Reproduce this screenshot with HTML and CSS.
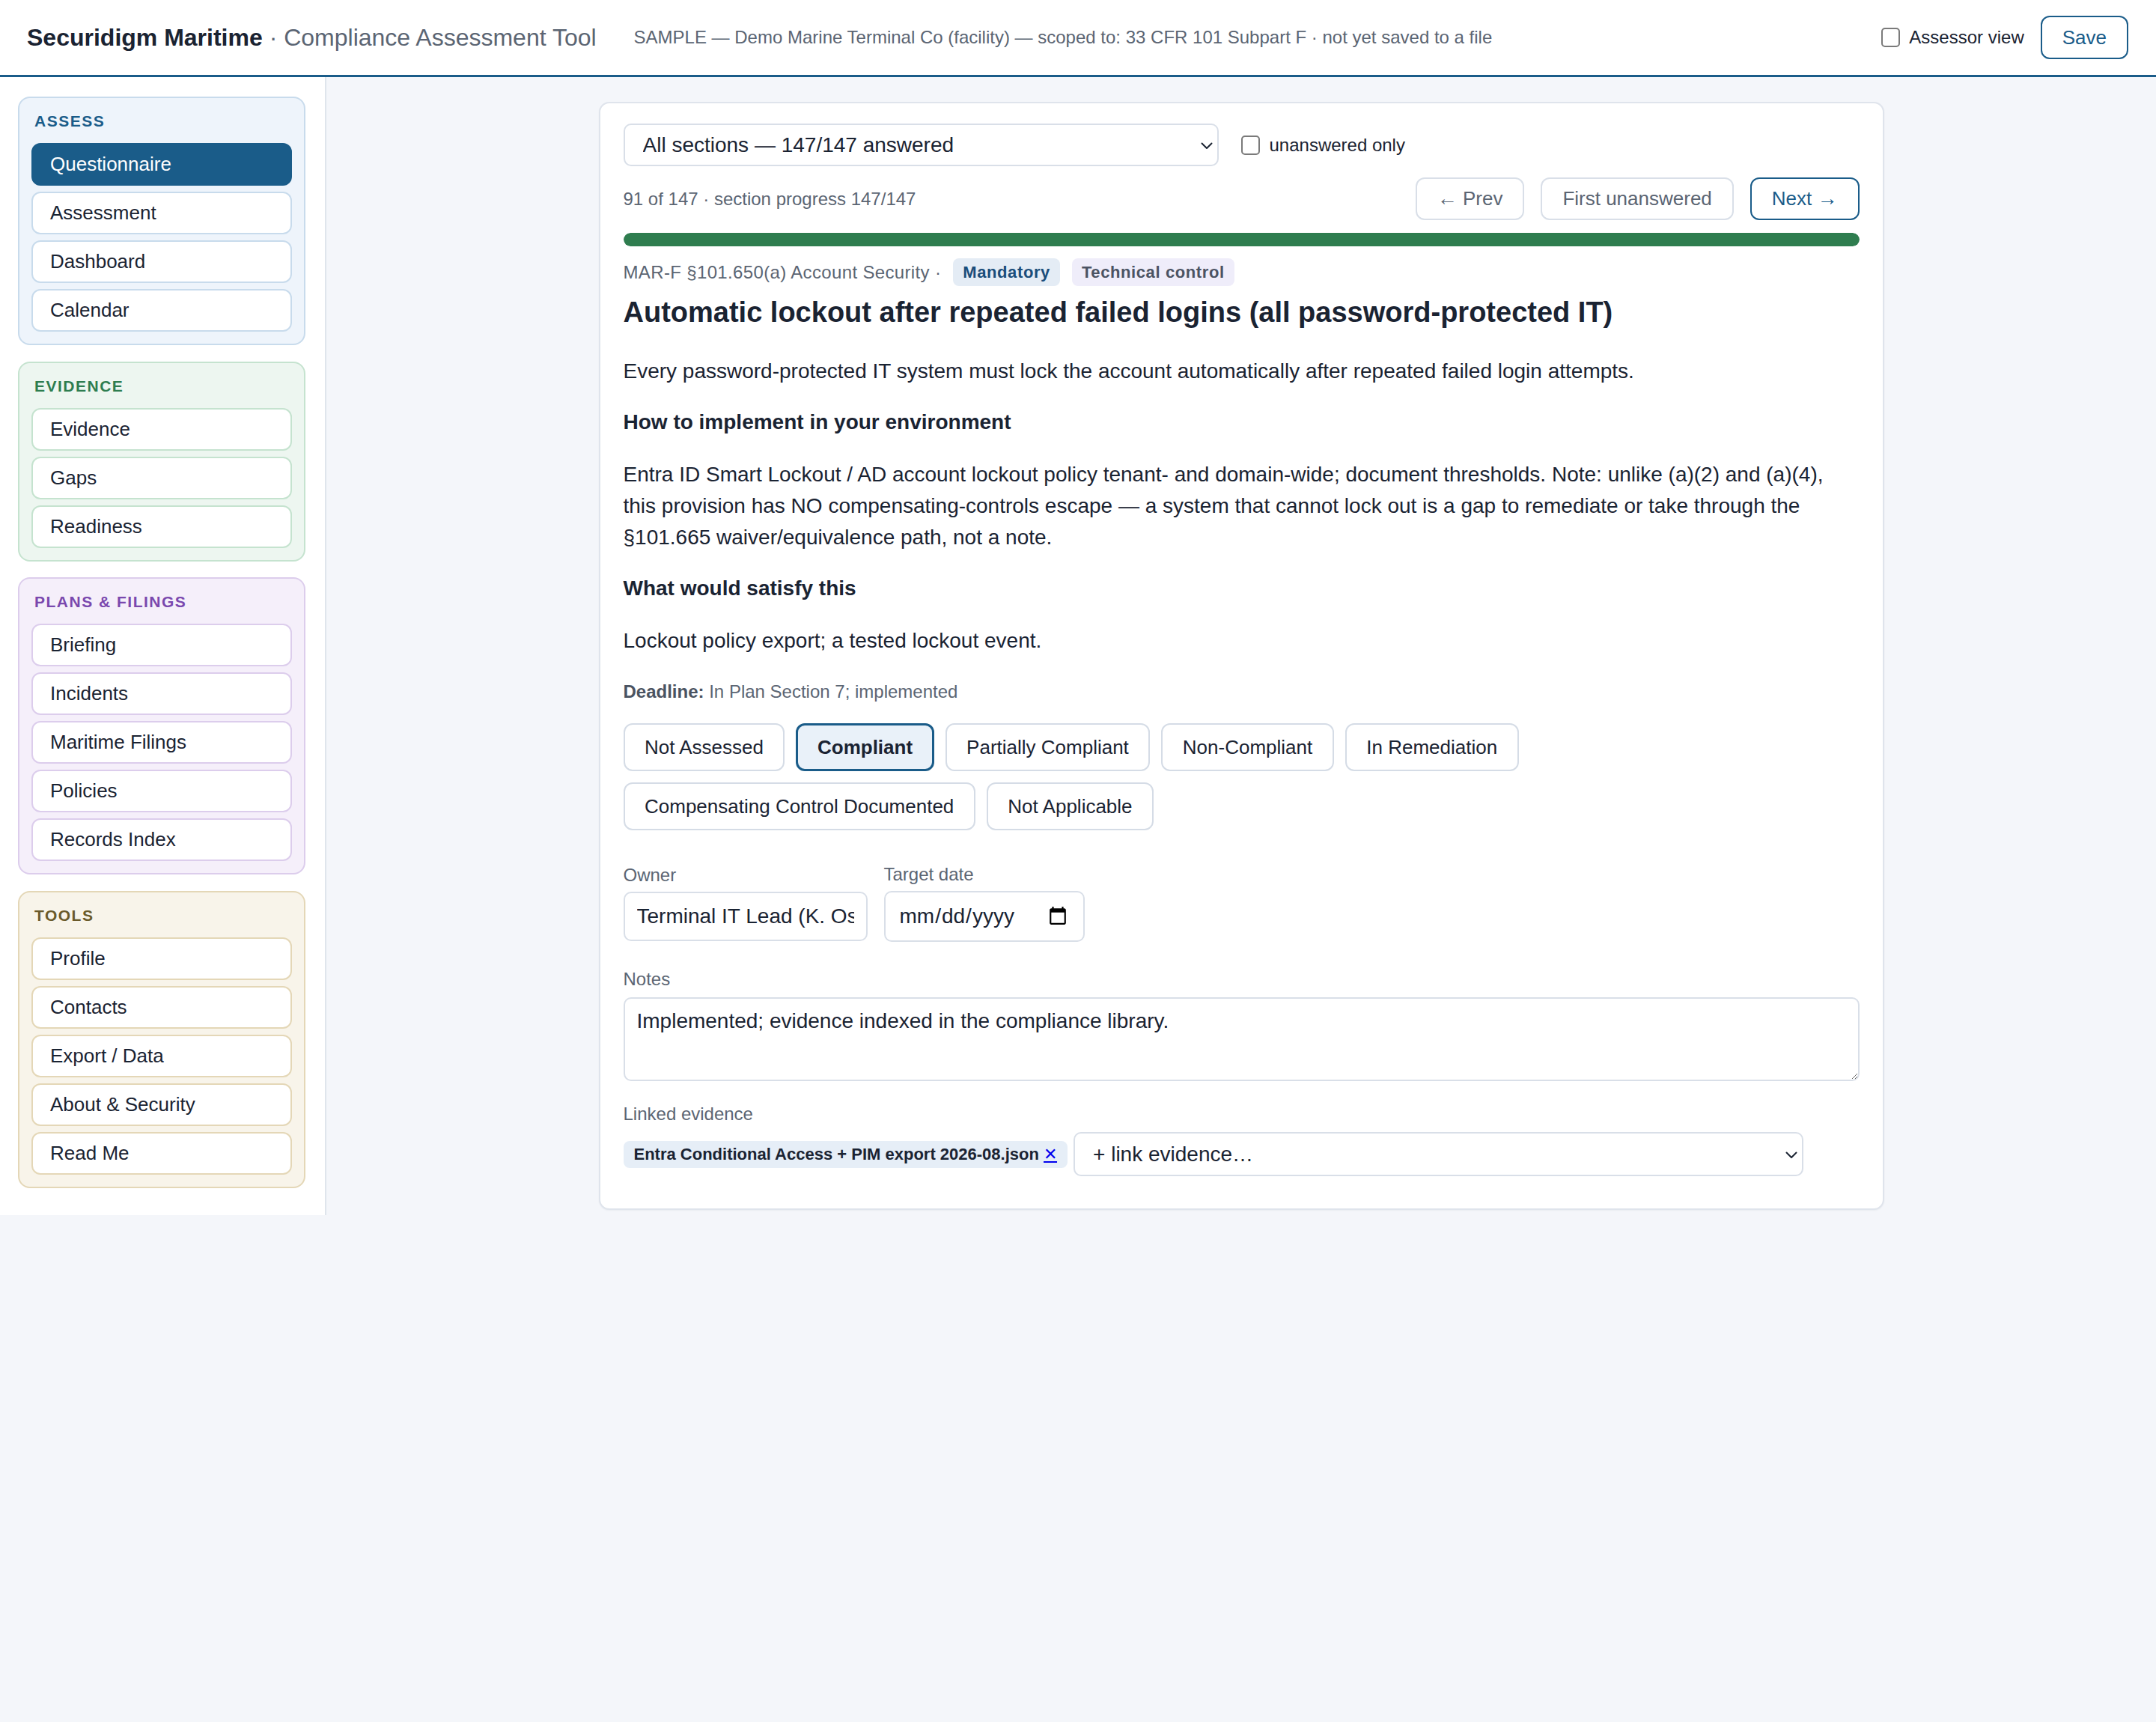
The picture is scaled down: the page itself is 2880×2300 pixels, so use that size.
FILE: index.html
```html
<!DOCTYPE html>
<html lang="en">
<head>
<meta charset="utf-8">
<title>Securidigm Maritime · Compliance Assessment Tool</title>
<link rel="stylesheet" href="styles.css">
</head>
<body>
<header class="topbar">
  <h1 class="brand"><strong>Securidigm Maritime</strong> · Compliance Assessment Tool</h1>
  <div class="scope">SAMPLE — Demo Marine Terminal Co (facility) — scoped to: 33 CFR 101 Subpart F · not yet saved to a file</div>
  <div class="top-actions">
    <label class="check"><input type="checkbox" class="box"> Assessor view</label>
    <button class="btn-save">Save</button>
  </div>
</header>

<div class="layout">
  <nav class="sidebar">
    <section class="group group-assess">
      <div class="group-label">ASSESS</div>
      <button class="nav-item active">Questionnaire</button>
      <button class="nav-item">Assessment</button>
      <button class="nav-item">Dashboard</button>
      <button class="nav-item">Calendar</button>
    </section>
    <section class="group group-evidence">
      <div class="group-label">EVIDENCE</div>
      <button class="nav-item">Evidence</button>
      <button class="nav-item">Gaps</button>
      <button class="nav-item">Readiness</button>
    </section>
    <section class="group group-plans">
      <div class="group-label">PLANS &amp; FILINGS</div>
      <button class="nav-item">Briefing</button>
      <button class="nav-item">Incidents</button>
      <button class="nav-item">Maritime Filings</button>
      <button class="nav-item">Policies</button>
      <button class="nav-item">Records Index</button>
    </section>
    <section class="group group-tools">
      <div class="group-label">TOOLS</div>
      <button class="nav-item">Profile</button>
      <button class="nav-item">Contacts</button>
      <button class="nav-item">Export / Data</button>
      <button class="nav-item">About &amp; Security</button>
      <button class="nav-item">Read Me</button>
    </section>
  </nav>

  <main class="main">
    <article class="card">
      <div class="filter-row">
        <span class="select-wrap section-wrap">
          <select class="select">
            <option>All sections — 147/147 answered</option>
          </select>
          <svg class="chev" width="16" height="10" viewBox="0 0 16 10" aria-hidden="true"><path d="M1.5 1.5 L8 8 L14.5 1.5" fill="none" stroke="#1a2332" stroke-width="2" stroke-linecap="round" stroke-linejoin="round"/></svg>
        </span>
        <label class="check check-sm"><input type="checkbox" class="box"> unanswered only</label>
      </div>

      <div class="pager-row">
        <div class="muted">91 of 147 · section progress 147/147</div>
        <div class="pager">
          <button class="btn"><span class="arrow">←</span> Prev</button>
          <button class="btn">First unanswered</button>
          <button class="btn btn-primary">Next <span class="arrow">→</span></button>
        </div>
      </div>

      <div class="progress"><div class="progress-fill" style="width:100%"></div></div>

      <div class="meta">
        <span class="muted meta-ref">MAR-F §101.650(a) Account Security ·</span>
        <span class="badge badge-mandatory">Mandatory</span>
        <span class="badge badge-tech">Technical control</span>
      </div>

      <h2 class="q-title">Automatic lockout after repeated failed logins (all password-protected IT)</h2>

      <p class="q-text first">Every password-protected IT system must lock the account automatically after repeated failed login attempts.</p>
      <h4 class="q-head">How to implement in your environment</h4>
      <p class="q-text">Entra ID Smart Lockout / AD account lockout policy tenant- and domain-wide; document thresholds. Note: unlike (a)(2) and (a)(4), this provision has NO compensating-controls escape — a system that cannot lock out is a gap to remediate or take through the §101.665 waiver/equivalence path, not a note.</p>
      <h4 class="q-head">What would satisfy this</h4>
      <p class="q-text">Lockout policy export; a tested lockout event.</p>

      <div class="deadline"><strong>Deadline:</strong> In Plan Section 7; implemented</div>

      <div class="statuses">
        <button class="status">Not Assessed</button>
        <button class="status selected">Compliant</button>
        <button class="status">Partially Compliant</button>
        <button class="status">Non-Compliant</button>
        <button class="status">In Remediation</button>
        <button class="status">Compensating Control Documented</button>
        <button class="status">Not Applicable</button>
      </div>

      <div class="fields">
        <div class="field field-owner">
          <label class="field-label" for="owner">Owner</label>
          <input id="owner" class="input" type="text" value="Terminal IT Lead (K. Osei)">
        </div>
        <div class="field field-date">
          <label class="field-label" for="target">Target date</label>
          <input id="target" class="input input-date" type="date">
        </div>
      </div>

      <label class="field-label notes-label" for="notes">Notes</label>
      <textarea id="notes" class="notes">Implemented; evidence indexed in the compliance library.</textarea>

      <div class="field-label linked-label">Linked evidence</div>
      <div class="linked-row">
        <span class="chip">Entra Conditional Access + PIM export 2026-08.json <a href="#" class="unlink">✕</a></span>
        <span class="select-wrap link-wrap">
          <select class="select">
            <option>+ link evidence…</option>
          </select>
          <svg class="chev" width="16" height="10" viewBox="0 0 16 10" aria-hidden="true"><path d="M1.5 1.5 L8 8 L14.5 1.5" fill="none" stroke="#1a2332" stroke-width="2" stroke-linecap="round" stroke-linejoin="round"/></svg>
        </span>
      </div>
    </article>
  </main>
</div>
</body>
</html>
```

FILE: styles.css
```css
* { box-sizing: border-box; }

html, body { margin: 0; }

body {
  font-family: "Liberation Sans", Arial, Helvetica, sans-serif;
  background: #f4f6fa;
  color: #1a2332;
}

/* ---------- top bar ---------- */
.topbar {
  height: 103px;
  background: #fff;
  border-bottom: 3px solid #1a5c89;
  display: flex;
  align-items: center;
  padding: 0 37px 0 36px;
}

.brand {
  margin: 0;
  font-size: 32px;
  font-weight: 400;
  color: #5b6573;
  white-space: nowrap;
}

.brand strong { color: #1a2332; font-weight: 700; }

.scope {
  margin-left: 50px;
  font-size: 24px;
  color: #5b6573;
  white-space: nowrap;
}

.top-actions {
  margin-left: auto;
  display: flex;
  align-items: center;
  gap: 22px;
}

.check {
  display: flex;
  align-items: center;
  gap: 12px;
  font-size: 24px;
  color: #1a2332;
  white-space: nowrap;
}

.box {
  appearance: none;
  -webkit-appearance: none;
  width: 25px;
  height: 26px;
  margin: 0;
  border: 2px solid #7a7a7a;
  border-radius: 5px;
  background: #fff;
}

.btn-save {
  font: inherit;
  font-size: 26px;
  line-height: 30px;
  color: #1a5c89;
  background: #fff;
  border: 2px solid #1a5c89;
  border-radius: 12px;
  padding: 12px 27px;
}

/* ---------- layout ---------- */
.layout {
  display: flex;
  align-items: flex-start;
}

.sidebar {
  width: 436px;
  flex: none;
  background: #fff;
  border-right: 2px solid #dfe5ec;
  padding: 26px 26px 36px 24px;
  display: flex;
  flex-direction: column;
  gap: 21.5px;
}

.group {
  border: 2px solid;
  border-radius: 16px;
  padding: 17px 16px 16px;
  display: flex;
  flex-direction: column;
  gap: 8px;
}

.group-label {
  font-size: 21px;
  font-weight: 700;
  letter-spacing: 1.5px;
  line-height: 27px;
  margin: 0 0 8px 4px;
}

.nav-item {
  display: block;
  width: 100%;
  text-align: left;
  font: inherit;
  font-size: 26px;
  line-height: 29px;
  color: #1a2332;
  background: #fff;
  border: 2px solid;
  border-radius: 12px;
  padding: 12px 23px;
}

.group-assess { background: #eef4fb; border-color: #c8dbec; }
.group-assess .group-label { color: #1a5c89; }
.group-assess .nav-item { border-color: #c8dbec; }
.group-assess .nav-item.active { background: #1a5c89; border-color: #1a5c89; color: #fff; }

.group-evidence { background: #edf6f0; border-color: #c5e3cf; }
.group-evidence .group-label { color: #2e7d4f; }
.group-evidence .nav-item { border-color: #c5e3cf; }

.group-plans { background: #f5effa; border-color: #dccdec; }
.group-plans .group-label { color: #7a48ae; }
.group-plans .nav-item { border-color: #dccdec; }

.group-tools { background: #f8f4ea; border-color: #e4d7b7; }
.group-tools .group-label { color: #6a5a2a; }
.group-tools .nav-item { border-color: #e4d7b7; }

/* ---------- main card ---------- */
.main {
  flex: 1;
  min-width: 0;
  padding: 33px;
}

.card {
  max-width: 1717px;
  margin: 0 auto;
  background: #fff;
  border: 2px solid #dfe4ec;
  border-radius: 14px;
  padding: 27px 31px 43px;
  box-shadow: 0 1px 2px rgba(20, 30, 50, 0.05);
}

.muted { color: #5b6573; font-size: 24px; }

.filter-row {
  display: flex;
  align-items: center;
  gap: 30px;
}

/* select with a drawn chevron laid over its right end */
.select-wrap {
  position: relative;
  display: block;
  flex: none;
}

.select {
  appearance: none;
  -webkit-appearance: none;
  display: block;
  width: 100%;
  height: 100%;
  font: inherit;
  font-size: 28px;
  color: #1a2332;
  background: #fff;
  border: 2px solid #d9dfe8;
  border-radius: 10px;
  padding: 0 44px 0 24px;
}

.chev {
  position: absolute;
  right: 8px;
  top: 50%;
  margin-top: -4px;
  pointer-events: none;
}

.section-wrap { width: 795px; height: 57px; }
.link-wrap { width: 975px; height: 59px; }

.check-sm { gap: 13px; }

.pager-row {
  margin-top: 15px;
  display: flex;
  align-items: center;
  justify-content: space-between;
}

.pager { display: flex; gap: 22px; }

.btn {
  font: inherit;
  font-size: 26px;
  line-height: 29px;
  color: #5b6573;
  background: #fff;
  border: 2px solid #d9dfe8;
  border-radius: 12px;
  padding: 12px 27px;
}

.arrow { font-size: 27px; line-height: 29px; }

.btn-primary { color: #1a5c89; border-color: #1a5c89; }

.progress {
  margin-top: 17px;
  height: 18px;
  border-radius: 9px;
  background: #e6ebf1;
  overflow: hidden;
}

.progress-fill { height: 100%; background: #2f7d4f; border-radius: 9px; }

.meta {
  margin-top: 16px;
  display: flex;
  align-items: center;
  gap: 14px;
}

.meta-ref { letter-spacing: 0.35px; margin-right: 2px; }

.badge {
  font-size: 22px;
  font-weight: 700;
  letter-spacing: 0.6px;
  line-height: 25px;
  padding: 6px 13px;
  border-radius: 8px;
}

.badge-mandatory { background: #e4ecf5; color: #1a4d7a; }
.badge-tech { background: #efedfa; color: #4b5363; margin-left: 2px; }

.q-title {
  margin: 12px 0 0;
  font-size: 38px;
  line-height: 46px;
  font-weight: 700;
  color: #1a2332;
}

.q-text {
  margin: 28px 0 0;
  font-size: 28px;
  line-height: 42px;
}

.q-text.first { margin-top: 35px; }

.q-head {
  margin: 26px 0 0;
  font-size: 28px;
  line-height: 42px;
  font-weight: 700;
}

.deadline {
  margin-top: 29px;
  font-size: 24px;
  line-height: 36px;
  color: #5b6573;
}

.deadline strong { color: #4a5361; }

.statuses {
  margin-top: 24px;
  display: flex;
  flex-wrap: wrap;
  gap: 15px;
  max-width: 1300px;
}

.status {
  font: inherit;
  font-size: 26px;
  line-height: 30px;
  color: #1a2332;
  background: #fff;
  border: 2px solid #d5dce6;
  border-radius: 12px;
  padding: 15px 26.5px;
}

.status.selected {
  background: #e9f1f9;
  border: 3px solid #1a5c89;
  padding: 14px 25.5px;
  font-weight: 700;
}

.fields {
  margin-top: 45px;
  display: flex;
  align-items: center;
  gap: 22px;
}

.field { display: flex; flex-direction: column; }

.field-label {
  display: block;
  font-size: 24px;
  line-height: 28px;
  color: #5b6573;
  margin-bottom: 8px;
}

.input {
  font: inherit;
  font-size: 28px;
  line-height: 32px;
  color: #1a2332;
  background: #fff;
  border: 2px solid #d9dfe8;
  border-radius: 10px;
  padding: 14px 16px;
}

.field-owner .input { width: 326px; height: 66px; }
.input-date { width: 268px; height: 68px; padding: 0 18px; }

.notes-label { margin-top: 36px; margin-bottom: 10px; }

.notes {
  display: block;
  width: 100%;
  height: 112px;
  font: inherit;
  font-size: 28px;
  line-height: 32px;
  color: #1a2332;
  border: 2px solid #d9dfe8;
  border-radius: 10px;
  padding: 14px 16px;
}

.linked-label { margin-top: 30px; margin-bottom: 10px; }

.linked-row {
  display: flex;
  align-items: center;
  gap: 8px;
}

.chip {
  font-size: 22px;
  line-height: 26px;
  font-weight: 700;
  background: #e6eef7;
  color: #1a2332;
  border-radius: 8px;
  padding: 5px 14px;
  white-space: nowrap;
}

.unlink {
  font-weight: 400;
  color: #0000ee;
  text-decoration: underline;
}
```
